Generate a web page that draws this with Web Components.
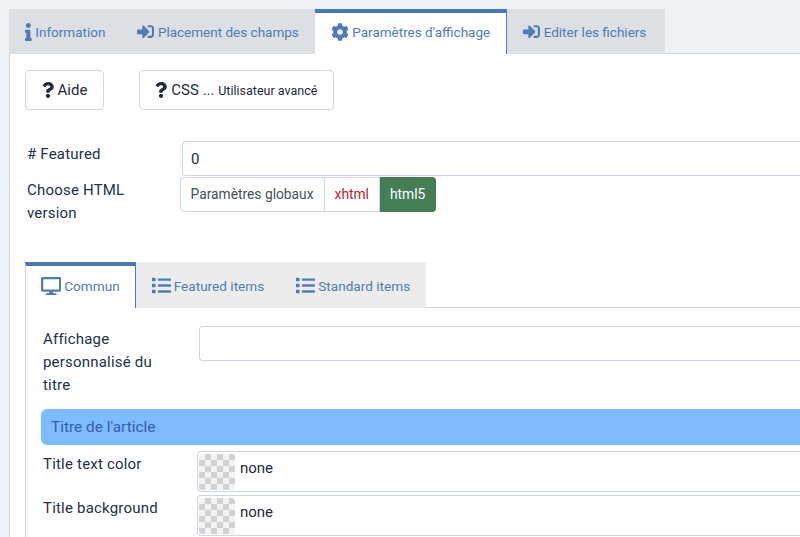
<!DOCTYPE html>
<html lang="fr">
<head>
<meta charset="utf-8">
<title>Paramètres d'affichage</title>
<style>
html, body { margin: 0; height: 100%; overflow: hidden; }
body {
    background: #edf2f7;
    font-family: Roboto, "Liberation Sans", sans-serif;
    font-size: 15px;
    color: #22314a;
    padding: 9px 0 0 9px;
    box-sizing: border-box;
}
.buttons { display: flex; gap: 35px; }
</style>
</head>
<body>
<settings-page>
    <tab-bar slot="tabs">
        <tab-item icon="info">Information</tab-item>
        <tab-item icon="signin">Placement des champs</tab-item>
        <tab-item icon="cog" active>Paramètres d'affichage</tab-item>
        <tab-item icon="signin">Editer les fichiers</tab-item>
    </tab-bar>

    <div class="buttons" slot="buttons">
        <help-button>Aide</help-button>
        <help-button>CSS ... <small style="font-size:12.5px">Utilisateur avancé</small></help-button>
    </div>

    <form-row slot="body" label="# Featured" width="155"><text-field value="0"></text-field></form-row>
    <form-row slot="body" label="Choose HTML version" width="153">
        <radio-group>
            <radio-choice>Paramètres globaux</radio-choice>
            <radio-choice tone="no">xhtml</radio-choice>
            <radio-choice tone="yes">html5</radio-choice>
        </radio-group>
    </form-row>

    <nested-panel slot="body">
        <tab-bar slot="tabs" small>
            <tab-item icon="desktop" active small>Commun</tab-item>
            <tab-item icon="list" small>Featured items</tab-item>
            <tab-item icon="list" small>Standard items</tab-item>
        </tab-bar>
        <form-row label="Affichage personnalisé du titre" width="156"><text-field></text-field></form-row>
        <section-banner>Titre de l'article</section-banner>
        <form-row label="Title text color" width="154"><color-field></color-field></form-row>
        <form-row label="Title background" width="154"><color-field></color-field></form-row>
    </nested-panel>
</settings-page>

<script>
const ICONS = {
  info: ["0 0 192 512", "M20 424.229h20V279.771H20c-11.046 0-20-8.954-20-20V212c0-11.046 8.954-20 20-20h112c11.046 0 20 8.954 20 20v212.229h20c11.046 0 20 8.954 20 20V492c0 11.046-8.954 20-20 20H20c-11.046 0-20-8.954-20-20v-47.771c0-11.046 8.954-20 20-20zM96 0C56.235 0 24 32.235 24 72s32.235 72 72 72 72-32.235 72-72S135.764 0 96 0z"],
  signin: ["0 0 512 512", "M416 448h-84c-6.6 0-12-5.4-12-12v-40c0-6.6 5.4-12 12-12h84c17.7 0 32-14.3 32-32V160c0-17.7-14.3-32-32-32h-84c-6.6 0-12-5.4-12-12V76c0-6.6 5.4-12 12-12h84c53 0 96 43 96 96v192c0 53-43 96-96 96zm-47-201L201 79c-15-15-41-4.5-41 17v96H24c-13.3 0-24 10.7-24 24v96c0 13.3 10.7 24 24 24h136v96c0 21.5 26 32 41 17l168-168c9.3-9.4 9.3-24.6 0-34z"],
  cog: ["0 0 512 512", "M487.4 315.7l-42.6-24.6c4.3-23.2 4.3-47 0-70.2l42.6-24.6c4.9-2.8 7.1-8.6 5.5-14-11.1-35.6-30-67.8-54.7-94.6-3.8-4.1-10-5.1-14.8-2.3L380.8 110c-17.9-15.4-38.5-27.3-60.8-35.1V25.8c0-5.6-3.9-10.5-9.4-11.7-36.7-8.2-74.3-7.8-109.2 0-5.5 1.2-9.4 6.1-9.4 11.7V75c-22.2 7.9-42.8 19.8-60.8 35.1L88.7 85.5c-4.9-2.8-11-1.9-14.8 2.3-24.7 26.7-43.6 58.9-54.7 94.6-1.7 5.4.6 11.2 5.5 14L67.3 221c-4.3 23.2-4.3 47 0 70.2l-42.6 24.6c-4.9 2.8-7.1 8.6-5.5 14 11.1 35.6 30 67.8 54.7 94.6 3.8 4.1 10 5.1 14.8 2.3l42.6-24.6c17.9 15.4 38.5 27.3 60.8 35.1v49.2c0 5.6 3.9 10.5 9.4 11.7 36.7 8.2 74.3 7.8 109.2 0 5.5-1.2 9.4-6.1 9.4-11.7v-49.2c22.2-7.9 42.8-19.8 60.8-35.1l42.6 24.6c4.9 2.8 11 1.9 14.8-2.3 24.7-26.7 43.6-58.9 54.7-94.6 1.5-5.5-.7-11.3-5.6-14.1zM256 336c-44.1 0-80-35.9-80-80s35.9-80 80-80 80 35.9 80 80-35.9 80-80 80z"],
  desktop: ["0 0 576 512", "M528 0H48C21.5 0 0 21.5 0 48v320c0 26.5 21.5 48 48 48h192l-16 48h-72c-13.3 0-24 10.7-24 24s10.7 24 24 24h272c13.3 0 24-10.7 24-24s-10.7-24-24-24h-72l-16-48h192c26.5 0 48-21.5 48-48V48c0-26.5-21.5-48-48-48zm-16 352H64V64h448v288z"],
  list: ["0 0 512 512", "M80 368H16a16 16 0 0 0-16 16v64a16 16 0 0 0 16 16h64a16 16 0 0 0 16-16v-64a16 16 0 0 0-16-16zm0-320H16A16 16 0 0 0 0 64v64a16 16 0 0 0 16 16h64a16 16 0 0 0 16-16V64a16 16 0 0 0-16-16zm0 160H16a16 16 0 0 0-16 16v64a16 16 0 0 0 16 16h64a16 16 0 0 0 16-16v-64a16 16 0 0 0-16-16zm416 176H176a16 16 0 0 0-16 16v32a16 16 0 0 0 16 16h320a16 16 0 0 0 16-16v-32a16 16 0 0 0-16-16zm0-320H176a16 16 0 0 0-16 16v32a16 16 0 0 0 16 16h320a16 16 0 0 0 16-16V80a16 16 0 0 0-16-16zm0 160H176a16 16 0 0 0-16 16v32a16 16 0 0 0 16 16h320a16 16 0 0 0 16-16v-32a16 16 0 0 0-16-16z"],
  question: ["0 0 384 512", "M202.021 0C122.202 0 70.503 32.703 29.914 91.026c-7.363 10.58-5.093 25.086 5.178 32.874l43.138 32.709c10.373 7.865 25.132 6.026 33.253-4.148 25.049-31.381 43.63-49.449 82.757-49.449 30.764 0 68.816 19.799 68.816 49.631 0 22.552-18.617 34.134-48.993 51.164-35.423 19.86-82.299 44.576-82.299 106.405V320c0 13.255 10.745 24 24 24h72.471c13.255 0 24-10.745 24-24v-5.773c0-42.86 125.268-44.645 125.268-160.627C377.504 66.256 286.902 0 202.021 0zM192 373.459c-38.196 0-69.271 31.075-69.271 69.271 0 38.195 31.075 69.27 69.271 69.27s69.271-31.075 69.271-69.271-31.075-69.27-69.271-69.27z"]
};

function iconSvg(name, h) {
  const [box, d] = ICONS[name];
  const parts = box.split(" ");
  const w = h * parts[2] / parts[3];
  return `<svg width="${w}" height="${h}" viewBox="${box}" fill="currentColor" aria-hidden="true"><path d="${d}"/></svg>`;
}

// small helper, every element is just a shadow root with its own style
function define(name, build) {
  customElements.define(name, class extends HTMLElement {
    constructor() {
      super();
      this.attachShadow({ mode: "open" });
    }
    connectedCallback() {
      this.shadowRoot.innerHTML = build(this);
    }
  });
}

define("settings-page", () => `
<style>
:host { display: block; width: 1100px; }
#panel {
    background: #fff;
    border-left: 1px solid #ccd6e4;
    border-top: 1px solid #ccd6e4;
    margin-top: -1px;
    padding: 16px 16px 60px 15px;
}
#body { margin-top: 31px; }
</style>
<slot name="tabs"></slot>
<div id="panel">
    <slot name="buttons"></slot>
    <div id="body"><slot name="body"></slot></div>
</div>
`);

define("tab-bar", (el) => `
<style>
:host {
    display: flex;
    width: ${el.hasAttribute("small") ? "401px" : "656px"};
    background: ${el.hasAttribute("small") ? "#ececec" : "#dcdfe4"};
    position: relative;
    z-index: 1;
}
</style>
<slot></slot>
`);

define("tab-item", (el) => {
  const small = el.hasAttribute("small");
  const name = el.getAttribute("icon");
  const h = small ? (name === "list" ? 19 : 18) : (name === "signin" ? 17 : 18);
  return `
<style>
:host {
    display: flex;
    align-items: center;
    gap: ${small ? 3 : 3.5}px;
    box-sizing: border-box;
    height: ${small ? 46 : 45}px;
    padding: 0 16px ${small ? 3 : 4}px;
    font-size: ${small ? 13.6 : 13.5}px;
    color: #4f7cb7;
    border-top: 4px solid transparent;
    white-space: nowrap;
}
:host([active]) {
    background: #fff;
    border-top-color: #4a78b4;
    border-left: ${small ? "1px solid #ccd6e4" : "0"};
    border-right: 1px solid #4f7cb7;
    padding-left: ${small ? 15 : 16}px;
    padding-right: ${small ? 15 : 16}px;
}
svg { flex: none; }
</style>
${iconSvg(name, h)}<slot></slot>
`;
});

define("help-button", () => `
<style>
:host {
    display: inline-flex;
    align-items: center;
    gap: 4px;
    box-sizing: border-box;
    height: 40px;
    padding: 0 15.5px;
    background: #fff;
    border: 1px solid #ccd6e4;
    border-radius: 4px;
    color: #1f2a3a;
    font-size: 15px;
    white-space: nowrap;
}
span { white-space: pre; }
</style>
${iconSvg("question", 16)}<span><slot></slot></span>
`);

define("form-row", (el) => `
<style>
:host {
    display: grid;
    grid-template-columns: ${el.getAttribute("width")}px 1fr;
    padding-left: 2px;
    margin-bottom: 1px;
}
label { line-height: 23px; padding: 2px 30px 0 0; letter-spacing: .2px; }
</style>
<label>${el.getAttribute("label")}</label>
<div><slot></slot></div>
`);

define("text-field", (el) => `
<style>
:host {
    display: flex;
    align-items: center;
    box-sizing: border-box;
    height: 35px;
    padding: 0 8px;
    border: 1px solid #ccd6e4;
    border-right: 0;
    border-radius: 4px 0 0 4px;
    background: #fff;
    color: #1f2a3a;
}
</style>
${el.getAttribute("value") || ""}
`);

define("radio-group", () => `
<style>
:host { display: inline-flex; height: 35px; }
</style>
<slot></slot>
`);

define("radio-choice", (el) => {
  const tone = el.getAttribute("tone");
  return `
<style>
:host {
    display: flex;
    align-items: center;
    box-sizing: border-box;
    padding: 0 10px 2px ${tone ? 10 : 9.5}px;
    font-size: 13.8px;
    background: ${tone === "yes" ? "#457d54" : "#fff"};
    color: ${tone === "yes" ? "#fff" : tone === "no" ? "#bd2130" : "#44505f"};
    border: 1px solid ${tone === "yes" ? "#457d54" : "#ccd6e4"};
    border-left-width: ${tone ? 0 : 1}px;
    border-radius: ${tone === "yes" ? "0 4px 4px 0" : tone ? "0" : "4px 0 0 4px"};
}
</style>
<slot></slot>
`;
});

define("nested-panel", () => `
<style>
:host { display: block; margin-top: 37px; }
#inner {
    border-left: 1px solid #ccd6e4;
    border-top: 1px solid #ccd6e4;
    margin-top: -1px;
    padding: 18px 0 0 15px;
    background: #fff;
}
</style>
<slot name="tabs"></slot>
<div id="inner"><slot></slot></div>
`);

define("section-banner", () => `
<style>
:host {
    display: flex;
    align-items: center;
    box-sizing: border-box;
    height: 36px;
    margin: 12px 0 6px 0;
    padding-left: 10px;
    background: #7dbdff;
    border-radius: 6px 0 0 6px;
    color: #3a5bb0;
    font-size: 15.4px;
}
</style>
<slot></slot>
`);

define("color-field", () => `
<style>
:host {
    display: flex;
    align-items: center;
    gap: 5px;
    box-sizing: border-box;
    height: 41px;
    margin-bottom: 2px;
    padding-left: 1px;
    border: 1px solid #ccd6e4;
    border-right: 0;
    border-radius: 4px 0 0 4px;
    color: #1f2a3a;
}
#swatch {
    width: 36px;
    height: 36px;
    border-radius: 3px;
    background: repeating-conic-gradient(#d2d2d2 0 25%, #f3f3f3 0 50%) 0 0 / 12px 12px;
}
span { margin-bottom: 7px; }
</style>
<div id="swatch"></div><span>none</span>
`);
</script>
</body>
</html>
